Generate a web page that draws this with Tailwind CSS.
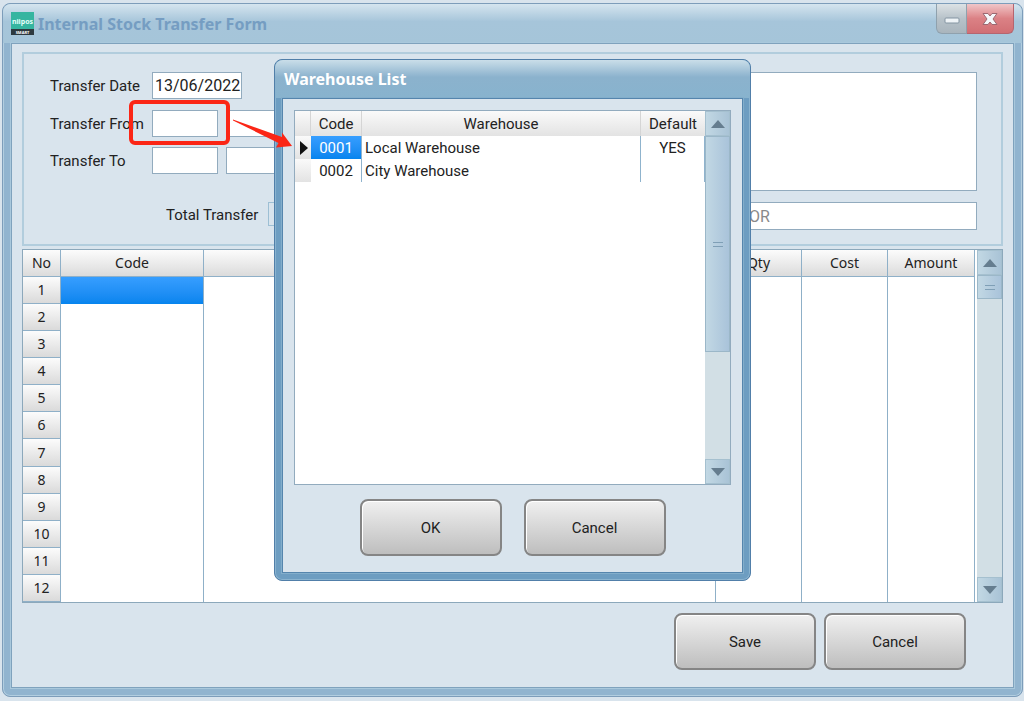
<!DOCTYPE html>
<html lang="en">
<head>
    <meta charset="UTF-8">
    <meta name="viewport" content="width=device-width, initial-scale=1.0">
    <title>Internal Stock Transfer Form</title>
    <script src="https://cdn.jsdelivr.net/npm/@tailwindcss/browser@4"></script>
</head>
<body class="bg-[#d9e4ed] font-[Roboto,sans-serif] text-[15px] leading-5 text-[#222] min-h-screen flex flex-col pt-[3px] pb-1 pl-[2px] pr-px relative overflow-hidden">

    <!-- Main window -->
    <main class="flex-1 flex flex-col rounded-lg border border-[#7d9dba] bg-[#91b4cf] px-2 pb-2 shadow-[inset_0_0_0_1px_#b2cee0]">
        <header class="-mx-2 h-[39px] flex items-start rounded-t-lg bg-linear-to-b from-[#d5e5ef] via-[#a6c5da] via-45% to-[#a5c5d9] pl-2 pr-2 shrink-0">
            <svg class="mt-2 w-[23px] h-[23px] shrink-0" viewBox="0 0 23 23" aria-hidden="true">
                <rect width="23" height="18" fill="#35b5a0"/>
                <rect y="17" width="23" height="6" fill="#2e3a40"/>
                <text x="11.5" y="12" font-family="Noto Sans, sans-serif" font-size="7" font-weight="700" fill="#e4fffa" text-anchor="middle">niipos</text>
                <text x="11.5" y="21.5" font-family="Noto Sans, sans-serif" font-size="4" font-weight="700" fill="#fff" text-anchor="middle">SMART</text>
            </svg>
            <h1 class="mt-[10px] ml-1 font-['Noto_Sans',sans-serif] font-bold text-[16px] text-[#759dc2] whitespace-nowrap">Internal Stock Transfer Form</h1>
            <div class="ml-auto flex h-[30px]">
                <button type="button" aria-label="Minimize" class="w-[31px] flex items-center justify-center rounded-bl-md border border-t-0 border-[#8fa1ad] bg-linear-to-b from-[#dce2e5] via-[#b7c2c9] via-50% to-[#a9b5bd]">
                    <svg class="w-4 h-4" viewBox="0 0 16 16"><rect x="1" y="7" width="14" height="5" rx="1" fill="#eef3f6" stroke="#8495a2"/></svg>
                </button>
                <button type="button" aria-label="Close" class="w-[47px] flex items-center justify-center rounded-br-md border border-t-0 border-l-0 border-[#b5656f] bg-linear-to-b from-[#efc6c9] via-[#db8185] via-50% to-[#d16f74]">
                    <svg class="w-4 h-4" viewBox="0 0 16 16"><path d="M1 2.500h5l2 2.500 2-2.500h5L11 8l4 5.500h-5L8 11l-2 2.500H1L5 8z" fill="#f5f8fa" stroke="#9c6971"/></svg>
                </button>
            </div>
        </header>

        <div class="flex-1 flex flex-col border border-[#7fa2bd] bg-[#d9e4ed] px-[10px] pt-2 shadow-[0_0_0_1px_#a9c8dc]">
            <form class="flex border-2 border-[#b2cddd] pt-[18px] pb-[14px] pl-[26px] pr-6">
                <div class="grid grid-cols-[94px_66px_300px] gap-x-2 content-start">
                    <label for="date" class="h-[38px] pt-1">Transfer Date</label>
                    <input id="date" value="13/06/2022" class="col-span-2 w-[90px] h-[27px] border border-[#92abbe] bg-white pl-[2px] text-[16px]">
                    <label for="from" class="h-[37px] pt-1 whitespace-nowrap">Transfer From</label>
                    <input id="from" class="w-full h-[27px] border border-[#92abbe] bg-white">
                    <input aria-label="From warehouse name" class="w-full h-[27px] border border-[#92abbe] bg-white">
                    <label for="to" class="h-[55px] pt-1">Transfer To</label>
                    <input id="to" class="w-full h-[27px] border border-[#92abbe] bg-white">
                    <input aria-label="To warehouse name" class="w-full h-[27px] border border-[#92abbe] bg-white">
                    <div class="col-span-3 flex justify-start pl-[116px] gap-2">
                        <label for="total" class="w-[94px] pt-[3px] whitespace-nowrap">Total Transfer</label>
                        <input id="total" readonly class="w-[120px] h-6 border border-[#9dbfd4]">
                    </div>
                </div>
                <div class="ml-auto w-[236px] flex flex-col gap-[11px]">
                    <textarea aria-label="Remarks" class="block h-[119px] border border-[#92abbe] bg-white resize-none"></textarea>
                    <input aria-label="User" disabled value="OR" class="h-[28px] border border-[#92abbe] bg-white pl-[7px] text-[16px] text-[#8a8a8a]">
                </div>
            </form>

            <div class="mt-[3px] flex h-[354px] overflow-hidden border border-[#8ca8bb] bg-white font-['Noto_Sans',sans-serif] text-[14px]">
                <table class="flex-1 h-full table-fixed border-separate border-spacing-0 text-center">
                    <colgroup><col class="w-[38px]"><col class="w-[143px]"><col><col class="w-[86px]"><col class="w-[86px]"><col class="w-[87px]"></colgroup>
                    <thead>
                        <tr class="h-[27px] bg-linear-to-b from-[#fcfcfc] to-[#dadada]">
                            <th class="border-r border-b border-[#8fb0c8] font-normal p-0">No</th>
                            <th class="border-r border-b border-[#8fb0c8] font-normal p-0">Code</th>
                            <th class="border-r border-b border-[#8fb0c8] font-normal p-0"></th>
                            <th class="border-r border-b border-[#8fb0c8] font-normal p-0">Qty</th>
                            <th class="border-r border-b border-[#8fb0c8] font-normal p-0">Cost</th>
                            <th class="border-r border-b border-[#8fb0c8] font-normal p-0">Amount</th>
                        </tr>
                    </thead>
                    <tbody id="item-rows"></tbody>
                </table>
                <div class="ml-[2px] w-[25px] flex flex-col bg-[#d2dfe5]">
                    <button type="button" aria-label="Scroll up" class="h-[25px] flex items-center justify-center border border-[#a5c0cf] bg-linear-to-r from-[#c2d8e4] to-[#a9c3d6]">
                        <svg class="w-[14px] h-2" viewBox="0 0 14 8"><path d="M0 8 7 0l7 8z" fill="#657d8f"/></svg>
                    </button>
                    <div class="h-6 flex flex-col items-center justify-center gap-[3px] border border-[#9bb7c8] bg-linear-to-r from-[#c2d8e4] to-[#a9c3da]">
                        <span class="w-[10px] h-px bg-[#7f9fb6]"></span>
                        <span class="w-[10px] h-px bg-[#7f9fb6]"></span>
                    </div>
                    <button type="button" aria-label="Scroll down" class="mt-auto h-[25px] flex items-center justify-center border border-[#a5c0cf] bg-linear-to-r from-[#c2d8e4] to-[#a9c3d6]">
                        <svg class="w-[14px] h-2" viewBox="0 0 14 8"><path d="M0 0h14L7 8z" fill="#657d8f"/></svg>
                    </button>
                </div>
            </div>

            <footer class="flex justify-end gap-2 pt-[10px] pr-[37px]">
                <button type="button" class="w-[142px] h-[57px] rounded-lg border-2 border-[#858585] bg-linear-to-b from-[#f0f0f0] to-[#bebebe] shadow-[inset_1px_1px_0_#fff]">Save</button>
                <button type="button" class="w-[142px] h-[57px] rounded-lg border-2 border-[#858585] bg-linear-to-b from-[#f0f0f0] to-[#bebebe] shadow-[inset_1px_1px_0_#fff]">Cancel</button>
            </footer>
        </div>
    </main>

    <!-- Warehouse picker -->
    <section role="dialog" aria-labelledby="list-title" class="absolute left-[274px] top-[59px] w-[477px] h-[522px] flex flex-col rounded-lg border border-[#517fa9] bg-[#6d9dc1] px-[7px] pb-[7px] shadow-[inset_0_0_0_1px_#8ab3cf]">
        <header class="-mx-[7px] h-[38px] shrink-0 rounded-t-lg bg-linear-to-b from-[#cadee9] via-[#8bb2cd] via-45% to-[#88b3ce] pl-[9px] pt-[9px]">
            <h2 id="list-title" class="font-['Noto_Sans',sans-serif] font-bold text-[16px] text-white">Warehouse List</h2>
        </header>
        <div class="flex-1 flex flex-col border border-[#5585ad] bg-[#d9e4ed] px-[11px] pt-[11px] shadow-[0_0_0_1px_#83aecb]">
            <div class="h-[375px] flex border border-[#92abbe] bg-white">
                <div class="flex-1">
                    <table class="w-full table-fixed border-separate border-spacing-0">
                        <colgroup><col class="w-4"><col class="w-[51px]"><col><col class="w-[64px]"></colgroup>
                        <thead>
                            <tr class="h-[25px] bg-linear-to-b from-[#fafafa] to-[#e3e3e3]">
                                <th class="border-r border-[#d5d5d5] p-0"></th>
                                <th class="border-r border-[#d5d5d5] p-0 font-normal">Code</th>
                                <th class="border-r border-[#d5d5d5] p-0 font-normal">Warehouse</th>
                                <th class="p-0 font-normal">Default</th>
                            </tr>
                        </thead>
                        <tbody>
                            <tr class="h-[23px]">
                                <td class="bg-linear-to-b from-[#fafafa] to-[#e3e3e3] p-0">
                                    <svg class="ml-[5px] w-2 h-[14px]" viewBox="0 0 8 14"><path d="M0 0l8 7-8 7z" fill="#111"/></svg>
                                </td>
                                <td class="border-r border-[#8fb3cd] bg-linear-to-b from-[#369eff] to-[#0584ee] p-0 text-center text-white">0001</td>
                                <td class="border-r border-[#8fb3cd] p-0 pl-[3px]">Local Warehouse</td>
                                <td class="border-r border-[#8fb3cd] p-0 text-center">YES</td>
                            </tr>
                            <tr class="h-[23px]">
                                <td class="bg-linear-to-b from-[#fafafa] to-[#e3e3e3] p-0"></td>
                                <td class="border-r border-[#8fb3cd] p-0 text-center">0002</td>
                                <td class="border-r border-[#8fb3cd] p-0 pl-[3px]">City Warehouse</td>
                                <td class="border-r border-[#8fb3cd] p-0"></td>
                            </tr>
                        </tbody>
                    </table>
                </div>
                <div class="w-[25px] flex flex-col bg-[#d2dfe5]">
                    <button type="button" aria-label="Scroll up" class="h-[25px] shrink-0 flex items-center justify-center border border-[#a5c0cf] bg-linear-to-r from-[#c2d8e4] to-[#a9c3d6]">
                        <svg class="w-[14px] h-2" viewBox="0 0 14 8"><path d="M0 8 7 0l7 8z" fill="#657d8f"/></svg>
                    </button>
                    <div class="h-[216px] flex flex-col items-center justify-center gap-[3px] border border-[#9bb7c8] bg-linear-to-r from-[#c2d8e4] to-[#a9c3da]">
                        <span class="w-[10px] h-px bg-[#7f9fb6]"></span>
                        <span class="w-[10px] h-px bg-[#7f9fb6]"></span>
                    </div>
                    <button type="button" aria-label="Scroll down" class="mt-auto h-[25px] shrink-0 flex items-center justify-center border border-[#a5c0cf] bg-linear-to-r from-[#c2d8e4] to-[#a9c3d6]">
                        <svg class="w-[14px] h-2" viewBox="0 0 14 8"><path d="M0 0h14L7 8z" fill="#657d8f"/></svg>
                    </button>
                </div>
            </div>
            <div class="mt-[14px] flex justify-center gap-[22px]">
                <button type="button" class="w-[142px] h-[57px] rounded-lg border-2 border-[#858585] bg-linear-to-b from-[#f0f0f0] to-[#bebebe] shadow-[inset_1px_1px_0_#fff]">OK</button>
                <button type="button" class="w-[142px] h-[57px] rounded-lg border-2 border-[#858585] bg-linear-to-b from-[#f0f0f0] to-[#bebebe] shadow-[inset_1px_1px_0_#fff]">Cancel</button>
            </div>
        </div>
    </section>

    <!-- Highlight on the code box and the arrow to the list -->
    <div class="absolute left-[129px] top-[100px] w-[101px] h-[45px] rounded-md border-4 border-[#fb2616] pointer-events-none"></div>
    <svg class="absolute left-[232px] top-[118px] w-[62px] h-[32px] pointer-events-none" viewBox="0 0 62 32" aria-hidden="true">
        <path d="M1 1.500 50 19 50 14.500 60 28 44 29.500 46.500 25 1 2.500z" fill="#fb2616"/>
    </svg>

    <script>
        const ROW_COUNT = 12;
        const rowsEl = document.getElementById('item-rows');

        for (let i = 1; i <= ROW_COUNT; i++) {
            const row = document.createElement('tr');
            row.className = 'h-[27px]';

            const numberCell = document.createElement('th');
            numberCell.className = 'border-r border-b border-[#8fb0c8] bg-linear-to-b from-[#fcfcfc] to-[#dadada] p-0 font-normal';
            numberCell.textContent = i;
            row.appendChild(numberCell);

            for (let c = 0; c < 5; c++) {
                const cell = document.createElement('td');
                cell.className = 'border-r border-[#8fb0c8] p-0';
                // First code cell is the selected one
                if (i === 1 && c === 0) {
                    cell.className = 'border-r border-[#8fb0c8] bg-linear-to-b from-[#369eff] to-[#0584ee] bg-clip-padding p-0';
                }
                row.appendChild(cell);
            }
            rowsEl.appendChild(row);
        }
    </script>
</body>
</html>
